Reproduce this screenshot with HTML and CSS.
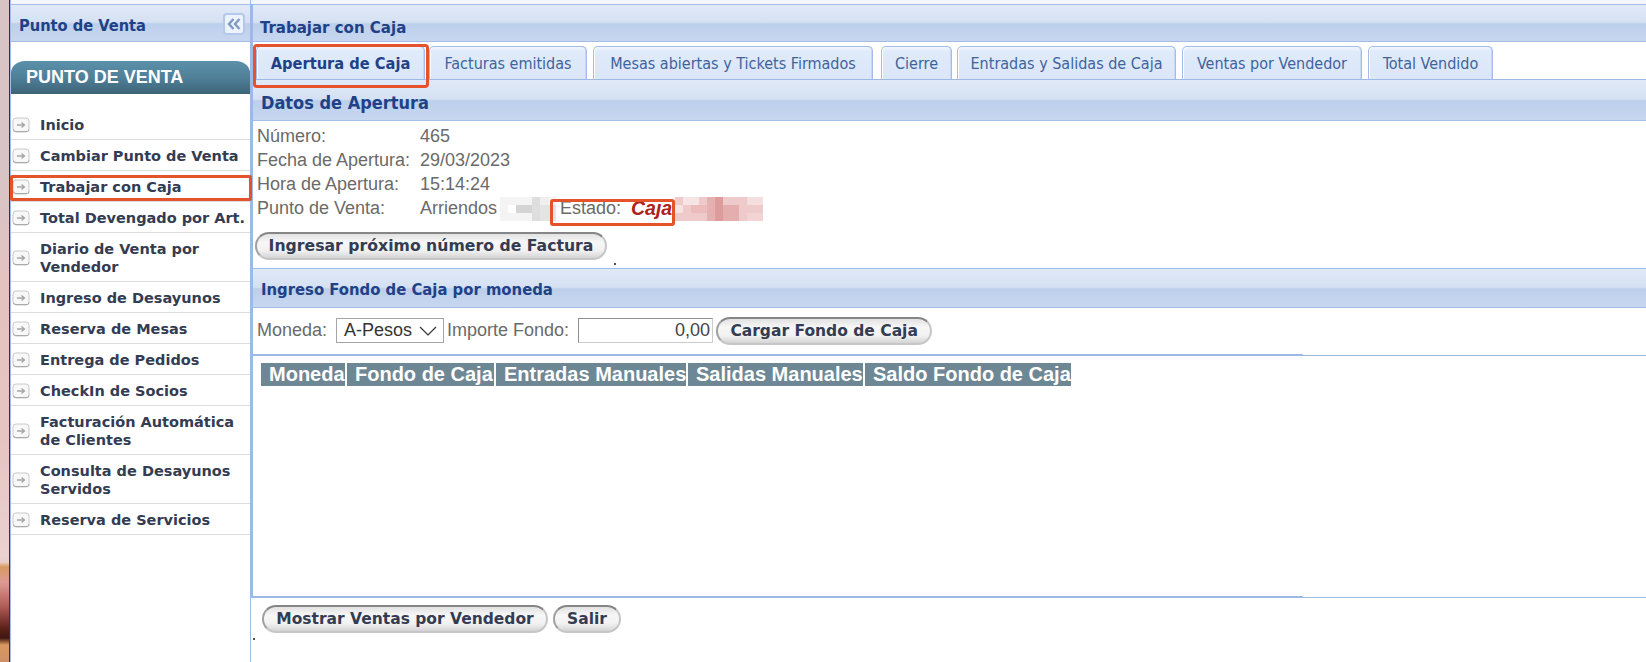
FILE: index.html
```html
<!DOCTYPE html>
<html lang="es">
<head>
<meta charset="utf-8">
<title>Trabajar con Caja</title>
<link rel="stylesheet" href="styles.css">
</head>
<body>
<div class="desk"></div>
<aside class="side">
  <div class="head side-head">
    <span class="side-title">Punto de Venta</span>
    <span class="collapse"><svg width="16" height="12" viewBox="0 0 16 12"><path d="M7.500 1 3 6l4.500 5M13.500 1 9 6l4.500 5" fill="none" stroke="#7f9ac4" stroke-width="2.400"/></svg></span>
  </div>
  <div class="brand">PUNTO DE VENTA</div>
  <ul class="menu">
    <li><svg class="ico" viewBox="0 0 18 16"><use href="#arrowbox"/></svg>Inicio</li>
    <li><svg class="ico" viewBox="0 0 18 16"><use href="#arrowbox"/></svg>Cambiar Punto de Venta</li>
    <li class="marked"><svg class="ico" viewBox="0 0 18 16"><use href="#arrowbox"/></svg>Trabajar con Caja</li>
    <li><svg class="ico" viewBox="0 0 18 16"><use href="#arrowbox"/></svg>Total Devengado por Art.</li>
    <li><svg class="ico" viewBox="0 0 18 16"><use href="#arrowbox"/></svg><span>Diario de Venta por<br>Vendedor</span></li>
    <li><svg class="ico" viewBox="0 0 18 16"><use href="#arrowbox"/></svg>Ingreso de Desayunos</li>
    <li><svg class="ico" viewBox="0 0 18 16"><use href="#arrowbox"/></svg>Reserva de Mesas</li>
    <li><svg class="ico" viewBox="0 0 18 16"><use href="#arrowbox"/></svg>Entrega de Pedidos</li>
    <li><svg class="ico" viewBox="0 0 18 16"><use href="#arrowbox"/></svg>CheckIn de Socios</li>
    <li><svg class="ico" viewBox="0 0 18 16"><use href="#arrowbox"/></svg><span>Facturación Automática<br>de Clientes</span></li>
    <li><svg class="ico" viewBox="0 0 18 16"><use href="#arrowbox"/></svg><span>Consulta de Desayunos<br>Servidos</span></li>
    <li><svg class="ico" viewBox="0 0 18 16"><use href="#arrowbox"/></svg>Reserva de Servicios</li>
  </ul>
</aside>
<main class="main">
  <div class="upper">
    <div class="head title">Trabajar con Caja</div>
    <div class="tabs">
      <div class="tab active marked-tab">Apertura de Caja</div>
      <div class="tab t2">Facturas emitidas</div>
      <div class="tab t3">Mesas abiertas y Tickets Firmados</div>
      <div class="tab t4">Cierre</div>
      <div class="tab t5">Entradas y Salidas de Caja</div>
      <div class="tab t6">Ventas por Vendedor</div>
      <div class="tab t7">Total Vendido</div>
    </div>
    <div class="head section first">Datos de Apertura</div>
    <div class="data">
      <div class="row"><span class="lbl">Número:</span><span>465</span></div>
      <div class="row"><span class="lbl">Fecha de Apertura:</span><span>29/03/2023</span></div>
      <div class="row"><span class="lbl">Hora de Apertura:</span><span>15:14:24</span></div>
      <div class="row">
        <span class="lbl">Punto de Venta:</span><span class="place">Arriendos</span>
        <svg class="blur-grey" width="56" height="24" viewBox="0 0 7 3" shape-rendering="crispEdges">
          <rect x="0" y="0" width="7" height="3" fill="#f4f4f4"/>
          <rect x="1" y="1" width="1" height="1" fill="#fff"/>
          <rect x="2" y="1" width="2" height="1" fill="#d4d4d4"/>
          <rect x="4" y="0" width="1" height="3" fill="#dedede"/>
          <rect x="5" y="0" width="1" height="1" fill="#efefef"/>
          <rect x="5" y="1" width="2" height="2" fill="#e4e4e4"/>
        </svg>
        <span class="estado">Estado:</span><b class="caja">Caja</b>
        <svg class="blur-red" width="90" height="24" viewBox="0 0 11 3" shape-rendering="crispEdges">
          <rect x="0" y="0" width="11" height="3" fill="#efcaca"/>
          <rect x="0" y="1" width="1" height="1" fill="#f8e2e2"/>
          <rect x="1" y="0" width="2" height="1" fill="#f7e4e4"/>
          <rect x="2" y="1" width="2" height="1" fill="#ecbcbc"/>
          <rect x="4" y="0" width="1" height="3" fill="#e5b0b0"/>
          <rect x="5" y="0" width="1" height="3" fill="#dd9c9c"/>
          <rect x="6" y="1" width="2" height="2" fill="#e5aeae"/>
          <rect x="9" y="0" width="2" height="1" fill="#f5dede"/>
          <rect x="9" y="2" width="2" height="1" fill="#f2d4d4"/>
        </svg>
        <span class="estado-mark"></span>
      </div>
      <button class="btn wide" type="button">Ingresar próximo número de Factura</button>
      <span class="dot dot-a"></span>
    </div>
    <div class="head section second">Ingreso Fondo de Caja por moneda</div>
    <div class="fund">
      <span>Moneda:</span>
      <span class="select">A-Pesos<svg width="18" height="10" viewBox="0 0 18 10"><path d="M1 1 9 9 17 1" fill="none" stroke="#333" stroke-width="1.2"/></svg></span>
      <span>Importe Fondo:</span>
      <input class="amount" type="text" value="0,00">
      <button class="btn load" type="button">Cargar Fondo de Caja</button>
    </div>
    <div class="rule"></div>
    <div class="grid-area">
      <div class="grid-head">
        <span class="c1">Moneda</span>
        <span class="c2">Fondo de Caja</span>
        <span class="c3">Entradas Manuales</span>
        <span class="c4">Salidas Manuales</span>
        <span class="c5">Saldo Fondo de Caja</span>
      </div>
    </div>
    <div class="rule"></div>
  </div>
  <div class="foot">
    <button class="btn show" type="button">Mostrar Ventas por Vendedor</button>
    <button class="btn exit" type="button">Salir</button>
    <span class="dot dot-b"></span>
  </div>
</main>
<svg class="defs" width="0" height="0">
  <symbol id="arrowbox" viewBox="0 0 18 16">
    <rect x="1" y="1" width="16" height="14" rx="3" fill="#f8f8f8" stroke="#c9c9c9"/>
    <path d="M1.5 12.5v0q0 2 2.500 2h11q2 0 2-2" fill="none" stroke="#aaa"/>
    <path d="M5 8h7M9.500 5.500 12.500 8 9.500 10.500" fill="none" stroke="#a5a5a5" stroke-width="1.300"/>
  </symbol>
</svg>
</body>
</html>
```
FILE: styles.css
```css
* { box-sizing: border-box; }
html, body { margin: 0; height: 662px; overflow: hidden; }
body {
  display: flex;
  background: #fff;
  font-family: "Liberation Sans", Arial, sans-serif;
  font-size: 18px;
  color: #6a6a6a;
}
.defs { position: absolute; }

.desk {
  width: 10px;
  flex: none;
  border-right: 1px solid #35323e;
  background: linear-gradient(180deg, #d8c3c5 0, #d9c4c5 190px, #e4c2c0 280px, #e6c4c2 440px, #ead2ce 555px, #e9cfc9 562px, #d89a60 567px, #dd9a94 582px, #b5605a 605px, #5c221a 628px, #3e1610 638px, #d89a60 645px, #cf8f68 662px);
}

.side {
  width: 240px;
  flex: none;
  border-left: 1px solid #a5bde6;
  padding-top: 4px;
  box-shadow: inset 0 4px 0 #f3f6fb;
}

.head {
  background: linear-gradient(180deg, #e0e9f7 0, #d5e1f3 48%, #bccfeb 52%, #c8d7f0 100%);
  border-top: 1px solid #a5bde6;
  border-bottom: 1px solid #a5bde6;
  color: #1f4187;
  font-family: "DejaVu Sans Condensed", "DejaVu Sans", sans-serif;
  font-weight: 700;
  font-size: 16.500px;
}

.side-head {
  height: 38px;
  display: flex;
  align-items: center;
  justify-content: space-between;
  padding: 2px 5px 0 8px;
  font-size: 16.300px;
}
.side-title { padding-top: 2px; }
.collapse {
  width: 22px;
  height: 22px;
  display: flex;
  align-items: center;
  justify-content: center;
  background: #eef3fb;
  border: 2px solid #b3c8ea;
  border-radius: 4px;
}

.brand {
  margin-top: 19px;
  height: 33px;
  padding: 0 15px;
  display: flex;
  align-items: center;
  border-radius: 14px 14px 0 0 / 12px 12px 0 0;
  background: linear-gradient(180deg, #5c90aa 0, #4f8098 50%, #3d6478 100%);
  color: #fff;
  font-weight: 700;
  font-size: 18px;
}

.menu {
  list-style: none;
  margin: 15px 0 0;
  padding: 0;
  font-family: "DejaVu Sans", sans-serif;
  font-weight: 700;
  font-size: 14.500px;
  line-height: 18px;
  color: #333c52;
}
.menu li {
  position: relative;
  display: flex;
  align-items: center;
  min-height: 31px;
  padding: 7px 0 5px;
  border-bottom: 1px solid #dcdcdc;
}
.ico { width: 18px; height: 16px; margin: 0 10px 0 1px; flex: none; }
.marked::after {
  content: "";
  position: absolute;
  z-index: 2;
  left: -1px;
  right: -2px;
  top: 4px;
  bottom: 0;
  border: 3px solid #e5532d;
  border-radius: 2px;
}
.side { position: relative; z-index: 1; }

.main {
  flex: 1;
  min-width: 0;
  position: relative;
  padding-top: 4px;
  box-shadow: inset 0 4px 0 #f3f6fb;
  border-left: 1px solid #9db9e6;
}
.upper {
  border-left: 2px solid #9db9e6;
}

.title {
  height: 38px;
  padding: 5px 0 0 7px;
  line-height: 34px;
  font-size: 16.700px;
}

.tabs {
  height: 38px;
  padding: 4px 0 0 3px;
  display: flex;
  border-bottom: 1px solid #9db9e6;
  background: #fff;
  font-family: "DejaVu Sans Condensed", "DejaVu Sans", sans-serif;
  font-size: 16px;
  color: #40639c;
}
.tab {
  height: 33px;
  padding: 0;
  display: flex;
  align-items: center;
  justify-content: center;
  white-space: nowrap;
  background: linear-gradient(180deg, #f2f6fd 0, #dfeafa 15%, #dbe7f9 100%);
  border: 1px solid #a5bde6;
  border-bottom: 0;
  border-radius: 5px 5px 0 0;
  box-shadow: inset 1px 0 0 #fff, inset -1px 0 0 #c8d8f0;
}
.active {
  position: relative;
  width: 169px;
  font-weight: 700;
  font-size: 16.300px;
  color: #1f4187;
}
.marked-tab::after {
  content: "";
  position: absolute;
  left: -4px;
  right: -5px;
  top: -3px;
  bottom: -9px;
  border: 3px solid #e5532d;
  border-radius: 4px;
}
.t2 { width: 158px; margin-left: 4px; }
.t3 { width: 280px; margin-left: 6px; }
.t4 { width: 71px; margin-left: 8px; }
.t5 { width: 219px; margin-left: 5px; }
.t6 { width: 180px; margin-left: 6px; }
.t7 { width: 125px; margin-left: 6px; }

.section {
  height: 41px;
  padding: 4px 0 0 8px;
  line-height: 36px;
  border-top: 0;
}
.first { font-size: 18px; line-height: 38px; }
.second {
  height: 40px;
  border-top: 1px solid #a5bde6;
  padding-top: 3px;
}

.data {
  position: relative;
  height: 147px;
  padding: 3px 0 0 4px;
}
.row {
  position: relative;
  display: flex;
  align-items: center;
  height: 24.200px;
}
.lbl { width: 163px; flex: none; }
.place { width: 78px; flex: none; white-space: nowrap; }
.blur-grey { margin-left: 2px; flex: none; }
.estado { margin-left: 4px; width: 71px; flex: none; }
.caja {
  color: #b0201a;
  font-style: italic;
  font-size: 19.500px;
  width: 43px;
  flex: none;
}
.blur-red { flex: none; margin-left: 0; }
.estado-mark {
  position: absolute;
  left: 293px;
  top: 2px;
  width: 125px;
  height: 27px;
  border: 3px solid #e5532d;
  border-radius: 3px;
}

.btn {
  display: block;
  height: 28px;
  padding: 0;
  border: 2px solid #c6c6c6;
  border-top-color: #868686;
  border-left-color: #a0a0a0;
  border-radius: 14px;
  background: linear-gradient(180deg, #e2e2e2 0, #f7f7f7 35%, #f1f1f1 70%, #d4d4d4 100%);
  color: #333c52;
  font-family: "DejaVu Sans", sans-serif;
  font-weight: 700;
  font-size: 15.500px;
  white-space: nowrap;
}
.wide { width: 352px; margin: 11px 0 0 -2px; font-size: 15.700px; }

.dot {
  position: absolute;
  width: 2px;
  height: 2px;
  background: #555;
}
.dot-a { left: 361px; top: 142px; }
.dot-b { left: 2px; top: 40px; }

.fund {
  height: 47px;
  display: flex;
  align-items: center;
  padding: 0 0 2px 4px;
}
.select {
  width: 108px;
  height: 25px;
  margin: 0 3px 0 9px;
  padding: 0 6px 0 7px;
  display: flex;
  align-items: center;
  justify-content: space-between;
  border: 1px solid #a5a5a5;
  color: #333;
}
.amount {
  width: 135px;
  height: 25px;
  margin: 0 3px 0 9px;
  padding: 0 2px;
  border: 1px solid #8f8f8f;
  border-bottom-color: #ccc;
  border-right-color: #ccc;
  text-align: right;
  font: 18px "Liberation Sans", Arial, sans-serif;
  color: #444;
}
.load { width: 216px; }

.rule {
  height: 1px;
  background: #9db9e6;
  position: relative;
}
.rule::before {
  content: "";
  position: absolute;
  left: 0;
  top: -1px;
  width: 1050px;
  height: 2px;
  background: #9db9e6;
}

.grid-area {
  height: 241px;
  padding: 7px 0 0 8px;
}
.grid-head {
  display: flex;
  gap: 2px;
  height: 23px;
  color: #fff;
  font-weight: 700;
  font-size: 20px;
  line-height: 23px;
}
.grid-head span {
  background: #6e8795;
  padding-left: 8px;
  white-space: nowrap;
  overflow: hidden;
}
.c1 { width: 84px; }
.c2 { width: 147px; }
.c3 { width: 190px; }
.c4 { width: 175px; }
.c5 { width: 206px; }

.foot {
  position: relative;
  flex: 1;
  padding: 7px 0 0 11px;
  display: flex;
  gap: 5px;
  align-items: flex-start;
}
.show { width: 286px; }
.exit { width: 68px; }
```
